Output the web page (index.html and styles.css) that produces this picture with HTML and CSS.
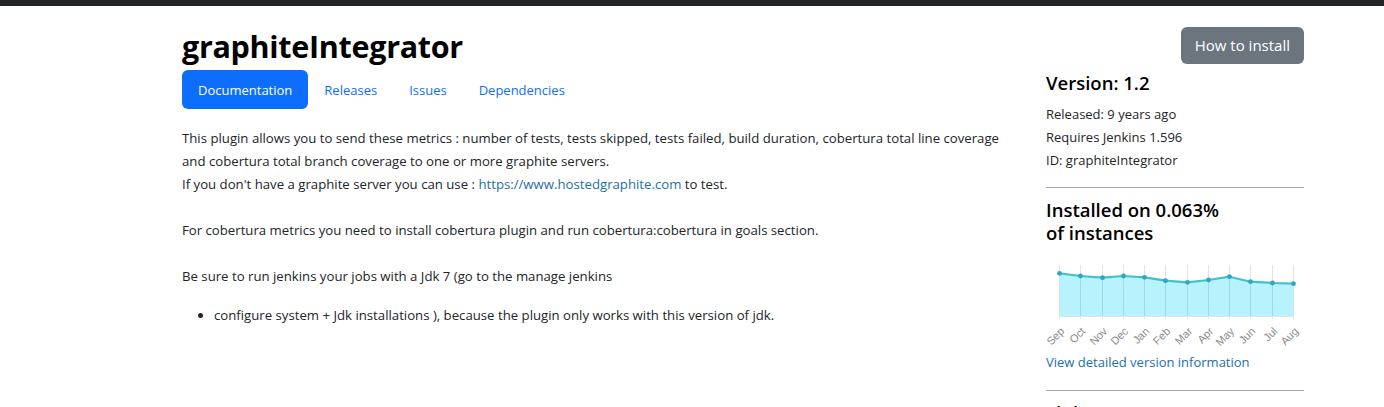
FILE: index.html
```html
<!DOCTYPE html>
<html>
<head>
<meta charset="utf-8">
<link rel="stylesheet" href="styles.css">
</head>
<body>
<div class="topbar"></div>
<div class="page">
  <div class="header">
    <h1 class="title">graphiteIntegrator</h1>
    <a class="btn-install" href="#">How to install</a>
  </div>
  <div class="layout">
    <main class="main">
      <nav class="tabs">
        <a class="tab active" href="#">Documentation</a>
        <a class="tab" href="#">Releases</a>
        <a class="tab" href="#">Issues</a>
        <a class="tab" href="#">Dependencies</a>
      </nav>
      <div class="doc">
        <p>This plugin allows you to send these metrics : number of tests, tests skipped, tests failed, build duration, cobertura total line coverage and cobertura total branch coverage to one or more graphite servers.<br>If you don't have a graphite server you can use : <a href="#">https://www.hostedgraphite.com</a> to test.<br><br>For cobertura metrics you need to install cobertura plugin and run cobertura:cobertura in goals section.<br><br>Be sure to run jenkins your jobs with a Jdk 7 (go to the manage jenkins</p>
        <ul>
          <li>configure system + Jdk installations ), because the plugin only works with this version of jdk.</li>
        </ul>
      </div>
    </main>
    <aside class="side">
      <h2 class="side-h version">Version: 1.2</h2>
      <div class="meta">Released: 9 years ago</div>
      <div class="meta">Requires Jenkins 1.596</div>
      <div class="meta">ID: graphiteIntegrator</div>
      <hr class="rule">
      <h2 class="side-h installs">Installed on 0.063%<br>of instances</h2>
      <svg class="chart" width="258" height="96" viewBox="0 0 258 96">
        <g stroke="#e3e3e3" stroke-width="1">
          <line x1="13.5" y1="10" x2="13.5" y2="64"/>
          <line x1="34.5" y1="10" x2="34.5" y2="64"/>
          <line x1="56.5" y1="10" x2="56.5" y2="64"/>
          <line x1="77.5" y1="10" x2="77.5" y2="64"/>
          <line x1="98.5" y1="10" x2="98.5" y2="64"/>
          <line x1="119.5" y1="10" x2="119.5" y2="64"/>
          <line x1="141.5" y1="10" x2="141.5" y2="64"/>
          <line x1="162.5" y1="10" x2="162.5" y2="64"/>
          <line x1="183.5" y1="10" x2="183.5" y2="64"/>
          <line x1="204.5" y1="10" x2="204.5" y2="64"/>
          <line x1="226.5" y1="10" x2="226.5" y2="64"/>
          <line x1="247.5" y1="10" x2="247.5" y2="64"/>
          <line x1="13" y1="61.5" x2="248" y2="61.5"/>
        </g>
        <polygon fill="#b3f1fd" fill-opacity="0.95" points="13.5,61 13.5,18.3 34.5,21 56.5,22.7 77.5,21 98.5,22.3 119.5,25.7 141.5,27.3 162.5,25 183.5,21.7 204.5,26.7 226.5,28 247.5,28.7 247.5,61"/>
        <g stroke="#9fdbe6" stroke-width="1">
          <line x1="34.5" y1="21" x2="34.5" y2="61"/>
          <line x1="56.5" y1="23" x2="56.5" y2="61"/>
          <line x1="77.5" y1="21" x2="77.5" y2="61"/>
          <line x1="98.5" y1="23" x2="98.5" y2="61"/>
          <line x1="119.5" y1="26" x2="119.5" y2="61"/>
          <line x1="141.5" y1="28" x2="141.5" y2="61"/>
          <line x1="162.5" y1="25" x2="162.5" y2="61"/>
          <line x1="183.5" y1="22" x2="183.5" y2="61"/>
          <line x1="204.5" y1="27" x2="204.5" y2="61"/>
          <line x1="226.5" y1="28" x2="226.5" y2="61"/>
        </g>
        <polyline fill="none" stroke="#45c1c9" stroke-width="2.2" stroke-linejoin="round" points="13.5,18.3 34.5,21 56.5,22.7 77.5,21 98.5,22.3 119.5,25.7 141.5,27.3 162.5,25 183.5,21.7 204.5,26.7 226.5,28 247.5,28.7"/>
        <g fill="#2ea7c6">
          <circle cx="13.5" cy="18.3" r="2.4"/>
          <circle cx="34.5" cy="21" r="2.4"/>
          <circle cx="56.5" cy="22.7" r="2.4"/>
          <circle cx="77.5" cy="21" r="2.4"/>
          <circle cx="98.5" cy="22.3" r="2.4"/>
          <circle cx="119.5" cy="25.7" r="2.4"/>
          <circle cx="141.5" cy="27.3" r="2.4"/>
          <circle cx="162.5" cy="25" r="2.4"/>
          <circle cx="183.5" cy="21.7" r="2.4"/>
          <circle cx="204.5" cy="26.7" r="2.4"/>
          <circle cx="226.5" cy="28" r="2.4"/>
          <circle cx="247.5" cy="28.7" r="2.4"/>
        </g>
        <g class="lbl" fill="#8a8a8a" font-size="11" text-anchor="end">
          <text transform="translate(19,77) rotate(-45)">Sep</text>
          <text transform="translate(40,77) rotate(-45)">Oct</text>
          <text transform="translate(62,77) rotate(-45)">Nov</text>
          <text transform="translate(83,77) rotate(-45)">Dec</text>
          <text transform="translate(104,77) rotate(-45)">Jan</text>
          <text transform="translate(125,77) rotate(-45)">Feb</text>
          <text transform="translate(147,77) rotate(-45)">Mar</text>
          <text transform="translate(168,77) rotate(-45)">Apr</text>
          <text transform="translate(189,77) rotate(-45)">May</text>
          <text transform="translate(210,77) rotate(-45)">Jun</text>
          <text transform="translate(232,77) rotate(-45)">Jul</text>
          <text transform="translate(253,77) rotate(-45)">Aug</text>
        </g>
      </svg>
      <a class="side-link" href="#">View detailed version information</a>
      <hr class="rule rule2">
      <h2 class="side-h">Links</h2>
    </aside>
  </div>
</div>
</body>
</html>
```

FILE: styles.css
```css
* { box-sizing: border-box; }
html, body { margin: 0; padding: 0; background: #fff; }
body {
  font-family: "Open Sans", "Noto Sans", sans-serif;
  color: #212529;
  font-size: 13.2px;
  overflow: hidden;
  height: 407px;
}
a { text-decoration: none; }
.topbar { height: 6px; background: #212529; }
.page { width: 1122px; margin-left: 182px; }
.header {
  display: flex;
  justify-content: space-between;
  align-items: flex-start;
  padding-top: 21px;
}
.title {
  margin: 0;
  font-family: "Open Sans", sans-serif;
  font-weight: 700;
  font-size: 30.5px;
  line-height: 38px;
  color: #000;
  letter-spacing: -0.3px;
}
.btn-install {
  display: inline-block;
  background: #6c757d;
  color: #fff;
  font-size: 15px;
  line-height: 37px;
  height: 37px;
  padding: 0 14px;
  border-radius: 6px;
}
.layout {
  display: grid;
  grid-template-columns: 840px 258px;
  column-gap: 24px;
}
.tabs { display: flex; margin-top: 5px; }
.tab {
  display: inline-block;
  height: 39px;
  line-height: 40px;
  padding: 0 16px;
  border-radius: 6px;
  color: #0d6efd;
  font-size: 13px;
}
.tab.active { background: #0d6efd; color: #fff; }
.doc { margin-top: 18px; line-height: 23px; color: #212529; }
.doc p { margin: 0 0 16px; }
.doc a { color: #1d6fa5; }
.doc ul { margin: 0; padding-left: 32px; }
.side { padding-top: 6px; }
.side-h {
  margin: 0;
  font-weight: 600;
  font-size: 18.5px;
  line-height: 24px;
  color: #000;
}
.version { margin-bottom: 8px; }
.meta { font-size: 13px; line-height: 23px; }
.rule {
  border: 0;
  border-top: 1px solid #aaa;
  margin: 15px 0 10px;
}
.installs { line-height: 23px; }
.chart { display: block; margin-top: 11px; font-family: "Liberation Sans", sans-serif; }
.side-link { display: block; color: #1d6fa5; font-size: 13px; line-height: 23px; }
.rule2 { margin-top: 16px; }
```
